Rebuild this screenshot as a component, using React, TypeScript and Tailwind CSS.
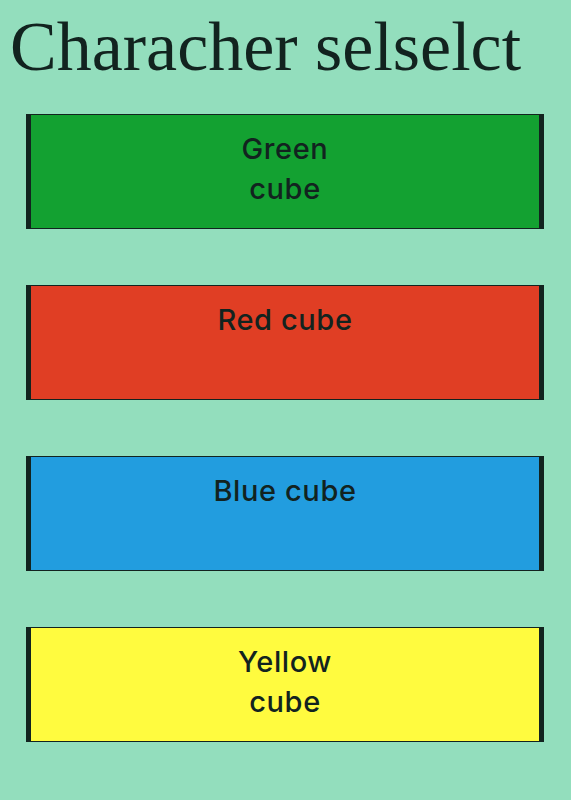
const cubes = [
  { name: 'Green cube', bg: 'bg-[#13a131]' },
  { name: 'Red cube', bg: 'bg-[#e03e24]' },
  { name: 'Blue cube', bg: 'bg-[#229ddf]' },
  { name: 'Yellow cube', bg: 'bg-[#fffb3f]' },
]

export default function App() {
  return (
    <div className="min-h-screen bg-[#93debd] text-[#12231f]">
      <h1 className="pl-[10px] pt-[7px] font-['Liberation_Serif',serif] text-[70px] leading-[80px]">
        Characher selselct
      </h1>
      <div className="mt-[27px] flex flex-col gap-[56px] px-[26px]">
        {cubes.map((cube) => (
          <button
            key={cube.name}
            className={`flex h-[115px] w-[518px] justify-center border-x-[5px] border-y border-[#12231f] pt-[14px] ${cube.bg}`}
          >
            <span className="max-w-[150px] font-['Inter',sans-serif] text-[29px] font-medium leading-[40px] tracking-[0.6px]">
              {cube.name}
            </span>
          </button>
        ))}
      </div>
    </div>
  )
}
